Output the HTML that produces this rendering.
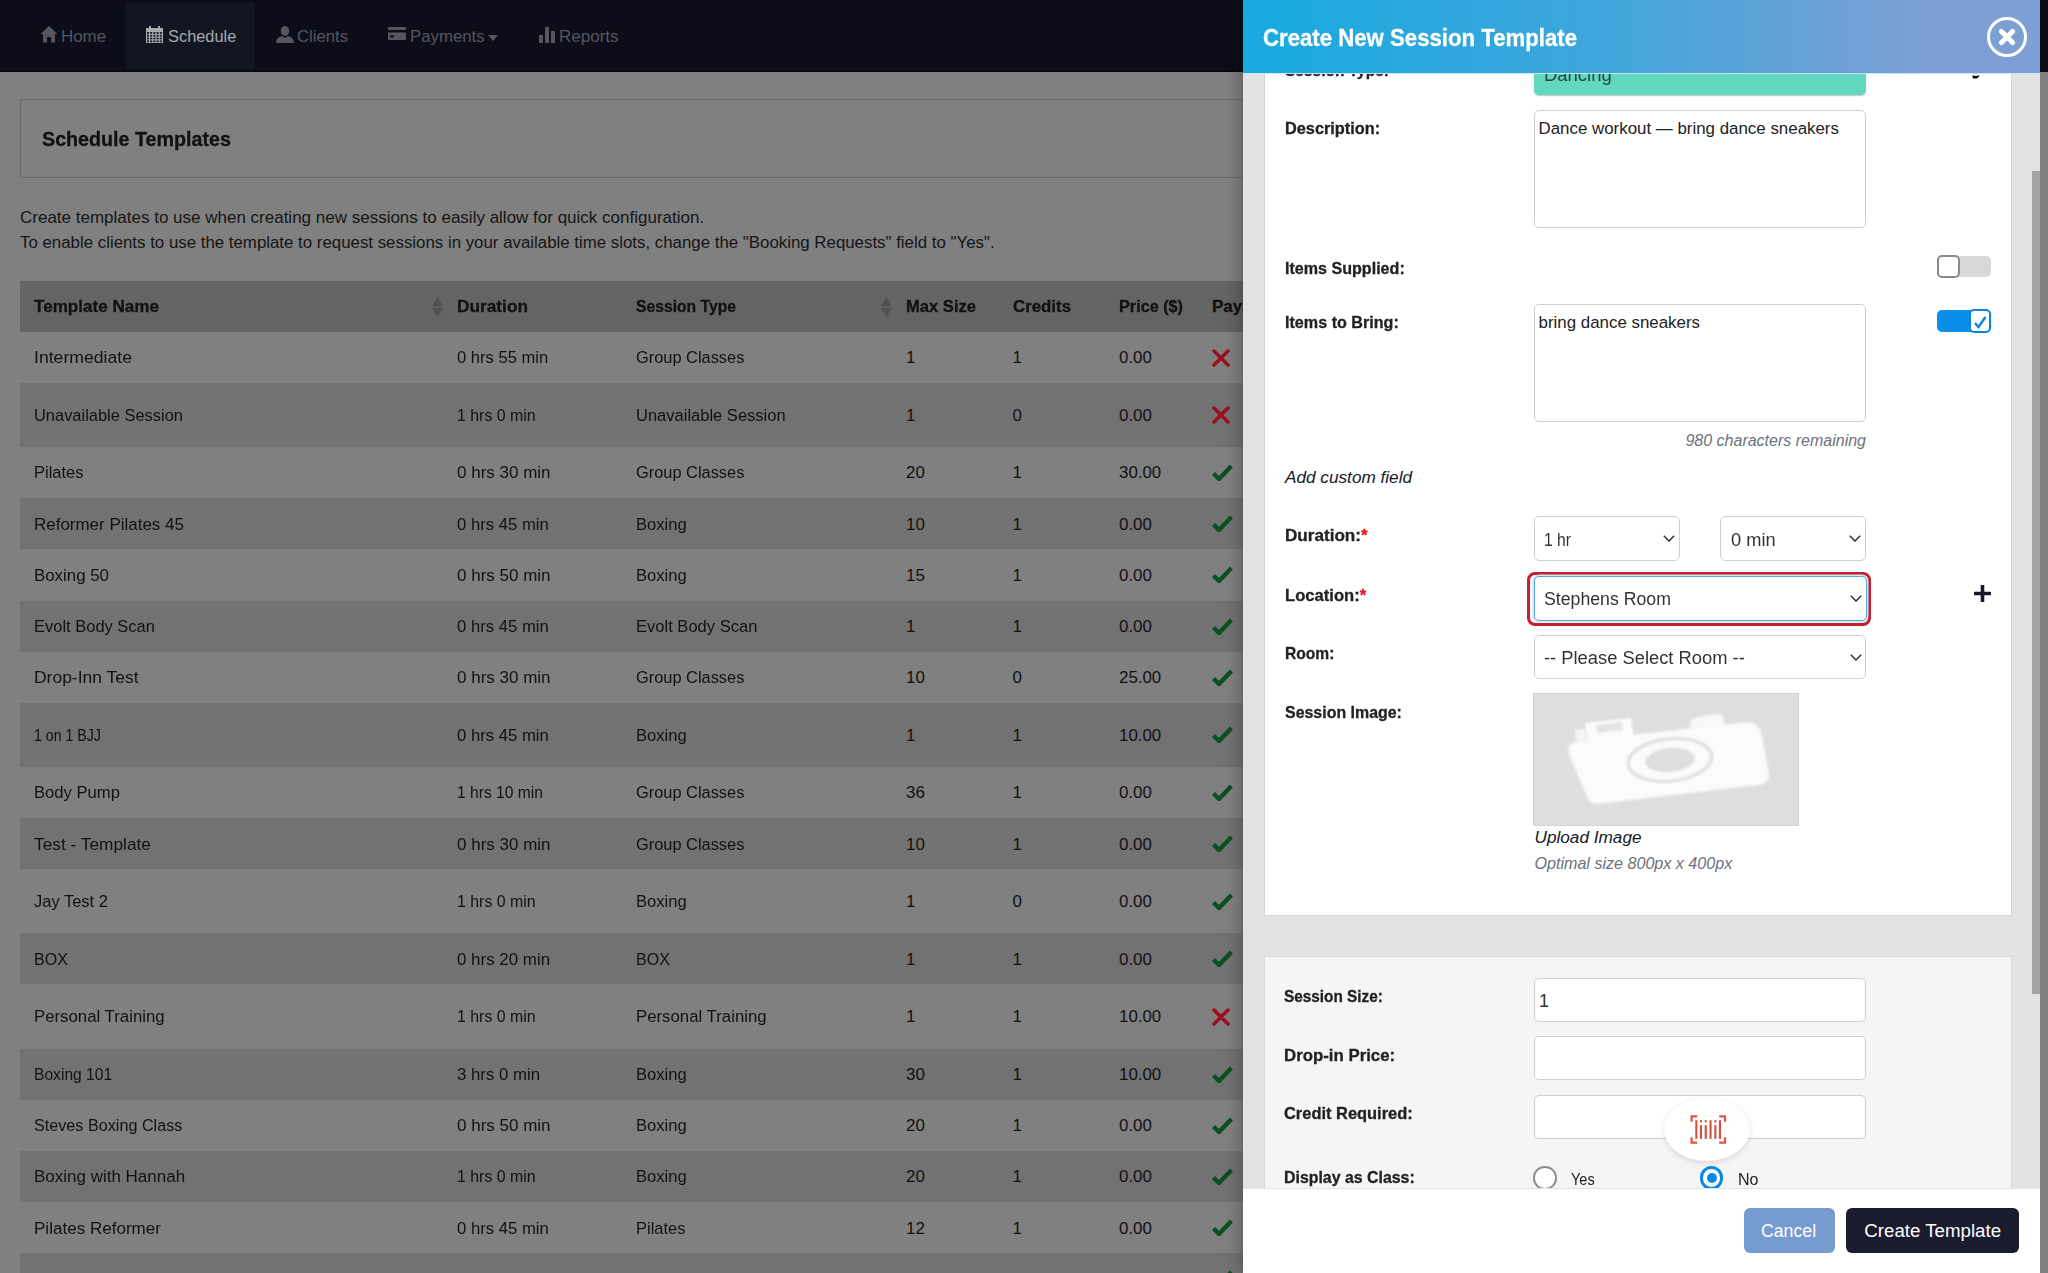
<!DOCTYPE html>
<html><head><meta charset="utf-8"><style>
html,body{margin:0;padding:0;}
body{width:2048px;height:1273px;overflow:hidden;position:relative;background:#808080;font-family:"Liberation Sans", sans-serif;}
.t{position:absolute;white-space:nowrap;}
.t[style*="font-weight:700"]{-webkit-text-stroke:0.3px currentColor;}
.b{position:absolute;}
</style></head><body>
<div class="b" style="left:0px;top:0px;width:2048px;height:71.5px;background:#0c0d19;"></div>
<div class="b" style="left:0px;top:71px;width:2048px;height:1.2px;background:#06070d;"></div>
<div class="b" style="left:126px;top:3px;width:129px;height:66px;background:#121620;"></div>
<svg class="b" style="left:40px;top:25px" width="18" height="18" viewBox="0 0 18 18"><path d="M9 1 L17.5 9 L15 9 L15 17.5 L11 17.5 L11 12 L7 12 L7 17.5 L3 17.5 L3 9 L0.5 9 Z" fill="#56565f"/></svg>
<div class="t" style="left:61px;top:26.93px;font-size:16.9px;line-height:19.43px;color:#56565f;">Home</div>
<svg class="b" style="left:146px;top:26px" width="17" height="17" viewBox="0 0 17 17"><rect x="0" y="2" width="17" height="15" fill="#a9a9ae"/><rect x="3" y="0" width="2" height="3" fill="#a9a9ae"/><rect x="12" y="0" width="2" height="3" fill="#a9a9ae"/><rect x="1.0" y="6.0" width="2" height="1.8" fill="#121620"/><rect x="1.0" y="8.8" width="2" height="1.8" fill="#121620"/><rect x="1.0" y="11.6" width="2" height="1.8" fill="#121620"/><rect x="1.0" y="14.4" width="2" height="1.8" fill="#121620"/><rect x="4.2" y="6.0" width="2" height="1.8" fill="#121620"/><rect x="4.2" y="8.8" width="2" height="1.8" fill="#121620"/><rect x="4.2" y="11.6" width="2" height="1.8" fill="#121620"/><rect x="4.2" y="14.4" width="2" height="1.8" fill="#121620"/><rect x="7.4" y="6.0" width="2" height="1.8" fill="#121620"/><rect x="7.4" y="8.8" width="2" height="1.8" fill="#121620"/><rect x="7.4" y="11.6" width="2" height="1.8" fill="#121620"/><rect x="7.4" y="14.4" width="2" height="1.8" fill="#121620"/><rect x="10.6" y="6.0" width="2" height="1.8" fill="#121620"/><rect x="10.6" y="8.8" width="2" height="1.8" fill="#121620"/><rect x="10.6" y="11.6" width="2" height="1.8" fill="#121620"/><rect x="10.6" y="14.4" width="2" height="1.8" fill="#121620"/><rect x="13.8" y="6.0" width="2" height="1.8" fill="#121620"/><rect x="13.8" y="8.8" width="2" height="1.8" fill="#121620"/><rect x="13.8" y="11.6" width="2" height="1.8" fill="#121620"/><rect x="13.8" y="14.4" width="2" height="1.8" fill="#121620"/></svg>
<div class="t" style="left:168px;top:27.39px;font-size:16.4px;line-height:18.86px;color:#a9a9ae;">Schedule</div>
<svg class="b" style="left:276px;top:26px" width="18" height="17" viewBox="0 0 18 17"><ellipse cx="9" cy="5" rx="4.2" ry="5" fill="#56565f"/><path d="M0 17 C0 12 4 10.5 6 10 L9 12 L12 10 C14 10.5 18 12 18 17 Z" fill="#56565f"/></svg>
<div class="t" style="left:297px;top:27.11px;font-size:16.7px;line-height:19.20px;color:#56565f;">Clients</div>
<svg class="b" style="left:388px;top:27px" width="18" height="13" viewBox="0 0 18 13"><rect x="0" y="0" width="18" height="13" rx="1" fill="#56565f"/><rect x="0" y="3" width="18" height="2.5" fill="#0c0d19"/><rect x="2" y="8.5" width="4" height="2" fill="#0c0d19"/></svg>
<div class="t" style="left:410px;top:27.02px;font-size:16.8px;line-height:19.32px;color:#56565f;">Payments</div>
<svg class="b" style="left:488px;top:34.5px" width="10" height="6" viewBox="0 0 10 6"><path d="M0 0 L10 0 L5 6 Z" fill="#56565f"/></svg>
<svg class="b" style="left:539px;top:27px" width="17" height="16" viewBox="0 0 17 16"><rect x="0" y="8" width="4" height="8" fill="#56565f"/><rect x="6" y="0" width="4" height="16" fill="#56565f"/><rect x="12" y="4" width="4" height="12" fill="#56565f"/></svg>
<div class="t" style="left:559px;top:26.83px;font-size:17px;line-height:19.55px;color:#56565f;">Reports</div>
<div class="b" style="left:20px;top:99px;width:1300px;height:78.5px;border:1.2px solid #6b6b6b;box-sizing:border-box;"></div>
<div class="t" style="left:42px;top:127.22px;font-size:20.6px;line-height:23.69px;color:#111;font-weight:700;transform:scaleX(0.9561);transform-origin:left center;">Schedule Templates</div>
<div class="t" style="left:20px;top:208.33px;font-size:17.0px;line-height:19.55px;color:#151515;">Create templates to use when creating new sessions to easily allow for quick configuration.</div>
<div class="t" style="left:20px;top:232.97px;font-size:16.85px;line-height:19.38px;color:#151515;">To enable clients to use the template to request sessions in your available time slots, change the "Booking Requests" field to "Yes".</div>
<div class="b" style="left:20px;top:280.5px;width:1300px;height:51.2px;background:#646464;"></div>
<div class="t" style="left:33.5px;top:297.13px;font-size:17px;line-height:19.55px;color:#111;font-weight:700;transform:scaleX(1.0048);transform-origin:left center;">Template Name</div>
<div class="t" style="left:456.5px;top:297.13px;font-size:17px;line-height:19.55px;color:#111;font-weight:700;transform:scaleX(1.0159);transform-origin:left center;">Duration</div>
<div class="t" style="left:635.5px;top:297.13px;font-size:17px;line-height:19.55px;color:#111;font-weight:700;transform:scaleX(0.9231);transform-origin:left center;">Session Type</div>
<div class="t" style="left:906px;top:297.13px;font-size:17px;line-height:19.55px;color:#111;font-weight:700;transform:scaleX(0.9748);transform-origin:left center;">Max Size</div>
<div class="t" style="left:1012.5px;top:297.13px;font-size:17px;line-height:19.55px;color:#111;font-weight:700;transform:scaleX(0.9902);transform-origin:left center;">Credits</div>
<div class="t" style="left:1119px;top:297.13px;font-size:17px;line-height:19.55px;color:#111;font-weight:700;transform:scaleX(0.9540);transform-origin:left center;">Price ($)</div>
<div class="t" style="left:1212px;top:297.13px;font-size:17px;line-height:19.55px;color:#111;font-weight:700;">Payable</div>
<svg class="b" style="left:432px;top:296.5px" width="11" height="20" viewBox="0 0 11 20"><path d="M5.5 0 L11 9.3 L0 9.3 Z" fill="#505050"/><path d="M5.5 20 L11 10.7 L0 10.7 Z" fill="#505050"/></svg>
<svg class="b" style="left:881px;top:296.5px" width="11" height="20" viewBox="0 0 11 20"><path d="M5.5 0 L11 9.3 L0 9.3 Z" fill="#505050"/><path d="M5.5 20 L11 10.7 L0 10.7 Z" fill="#505050"/></svg>
<div class="t" style="left:34px;top:348.23px;font-size:16.9px;line-height:19.43px;color:#111;transform:scaleX(1.0432);transform-origin:left center;">Intermediate</div>
<div class="t" style="left:456.6px;top:348.23px;font-size:16.9px;line-height:19.43px;color:#111;transform:scaleX(0.9807);transform-origin:left center;">0 hrs 55 min</div>
<div class="t" style="left:636px;top:348.23px;font-size:16.9px;line-height:19.43px;color:#111;transform:scaleX(0.9698);transform-origin:left center;">Group Classes</div>
<div class="t" style="left:906px;top:348.23px;font-size:16.9px;line-height:19.43px;color:#111;">1</div>
<div class="t" style="left:1012.5px;top:348.23px;font-size:16.9px;line-height:19.43px;color:#111;">1</div>
<div class="t" style="left:1119px;top:348.23px;font-size:16.9px;line-height:19.43px;color:#111;">0.00</div>
<svg class="b" style="left:1212px;top:348.6px" width="18" height="18" viewBox="0 0 18 18"><path d="M2 2 L16 16 M16 2 L2 16" stroke="#9c0e1d" stroke-width="3.5" stroke-linecap="round"/></svg>
<div class="b" style="left:20px;top:382.9px;width:1300px;height:64px;background:#727272;"></div>
<div class="t" style="left:34px;top:405.83px;font-size:16.9px;line-height:19.43px;color:#111;transform:scaleX(0.9730);transform-origin:left center;">Unavailable Session</div>
<div class="t" style="left:456.6px;top:405.83px;font-size:16.9px;line-height:19.43px;color:#111;transform:scaleX(0.9415);transform-origin:left center;">1 hrs 0 min</div>
<div class="t" style="left:636px;top:405.83px;font-size:16.9px;line-height:19.43px;color:#111;transform:scaleX(0.9776);transform-origin:left center;">Unavailable Session</div>
<div class="t" style="left:906px;top:405.83px;font-size:16.9px;line-height:19.43px;color:#111;">1</div>
<div class="t" style="left:1012.5px;top:405.83px;font-size:16.9px;line-height:19.43px;color:#111;">0</div>
<div class="t" style="left:1119px;top:405.83px;font-size:16.9px;line-height:19.43px;color:#111;">0.00</div>
<svg class="b" style="left:1212px;top:406.2px" width="18" height="18" viewBox="0 0 18 18"><path d="M2 2 L16 16 M16 2 L2 16" stroke="#9c0e1d" stroke-width="3.5" stroke-linecap="round"/></svg>
<div class="t" style="left:34px;top:463.43px;font-size:16.9px;line-height:19.43px;color:#111;transform:scaleX(0.9739);transform-origin:left center;">Pilates</div>
<div class="t" style="left:456.6px;top:463.43px;font-size:16.9px;line-height:19.43px;color:#111;transform:scaleX(1.0065);transform-origin:left center;">0 hrs 30 min</div>
<div class="t" style="left:636px;top:463.43px;font-size:16.9px;line-height:19.43px;color:#111;transform:scaleX(0.9698);transform-origin:left center;">Group Classes</div>
<div class="t" style="left:906px;top:463.43px;font-size:16.9px;line-height:19.43px;color:#111;">20</div>
<div class="t" style="left:1012.5px;top:463.43px;font-size:16.9px;line-height:19.43px;color:#111;">1</div>
<div class="t" style="left:1119px;top:463.43px;font-size:16.9px;line-height:19.43px;color:#111;">30.00</div>
<svg class="b" style="left:1212px;top:464.0px" width="21" height="17" viewBox="0 0 21 17"><path d="M1.5 9.5 L7 15 L19.5 2" stroke="#0b4f22" stroke-width="4.4" fill="none" stroke-linecap="butt"/></svg>
<div class="b" style="left:20px;top:498.1px;width:1300px;height:51.2px;background:#727272;"></div>
<div class="t" style="left:34px;top:514.63px;font-size:16.9px;line-height:19.43px;color:#111;transform:scaleX(1.0044);transform-origin:left center;">Reformer Pilates 45</div>
<div class="t" style="left:456.6px;top:514.63px;font-size:16.9px;line-height:19.43px;color:#111;transform:scaleX(0.9882);transform-origin:left center;">0 hrs 45 min</div>
<div class="t" style="left:636px;top:514.63px;font-size:16.9px;line-height:19.43px;color:#111;transform:scaleX(0.9811);transform-origin:left center;">Boxing</div>
<div class="t" style="left:906px;top:514.63px;font-size:16.9px;line-height:19.43px;color:#111;">10</div>
<div class="t" style="left:1012.5px;top:514.63px;font-size:16.9px;line-height:19.43px;color:#111;">1</div>
<div class="t" style="left:1119px;top:514.63px;font-size:16.9px;line-height:19.43px;color:#111;">0.00</div>
<svg class="b" style="left:1212px;top:515.2px" width="21" height="17" viewBox="0 0 21 17"><path d="M1.5 9.5 L7 15 L19.5 2" stroke="#0b4f22" stroke-width="4.4" fill="none" stroke-linecap="butt"/></svg>
<div class="t" style="left:34px;top:565.83px;font-size:16.9px;line-height:19.43px;color:#111;transform:scaleX(0.9977);transform-origin:left center;">Boxing 50</div>
<div class="t" style="left:456.6px;top:565.83px;font-size:16.9px;line-height:19.43px;color:#111;transform:scaleX(1.0065);transform-origin:left center;">0 hrs 50 min</div>
<div class="t" style="left:636px;top:565.83px;font-size:16.9px;line-height:19.43px;color:#111;transform:scaleX(0.9811);transform-origin:left center;">Boxing</div>
<div class="t" style="left:906px;top:565.83px;font-size:16.9px;line-height:19.43px;color:#111;">15</div>
<div class="t" style="left:1012.5px;top:565.83px;font-size:16.9px;line-height:19.43px;color:#111;">1</div>
<div class="t" style="left:1119px;top:565.83px;font-size:16.9px;line-height:19.43px;color:#111;">0.00</div>
<svg class="b" style="left:1212px;top:566.4px" width="21" height="17" viewBox="0 0 21 17"><path d="M1.5 9.5 L7 15 L19.5 2" stroke="#0b4f22" stroke-width="4.4" fill="none" stroke-linecap="butt"/></svg>
<div class="b" style="left:20px;top:600.5px;width:1300px;height:51.2px;background:#727272;"></div>
<div class="t" style="left:34px;top:617.03px;font-size:16.9px;line-height:19.43px;color:#111;transform:scaleX(0.9758);transform-origin:left center;">Evolt Body Scan</div>
<div class="t" style="left:456.6px;top:617.03px;font-size:16.9px;line-height:19.43px;color:#111;transform:scaleX(0.9882);transform-origin:left center;">0 hrs 45 min</div>
<div class="t" style="left:636px;top:617.03px;font-size:16.9px;line-height:19.43px;color:#111;transform:scaleX(0.9790);transform-origin:left center;">Evolt Body Scan</div>
<div class="t" style="left:906px;top:617.03px;font-size:16.9px;line-height:19.43px;color:#111;">1</div>
<div class="t" style="left:1012.5px;top:617.03px;font-size:16.9px;line-height:19.43px;color:#111;">1</div>
<div class="t" style="left:1119px;top:617.03px;font-size:16.9px;line-height:19.43px;color:#111;">0.00</div>
<svg class="b" style="left:1212px;top:617.6px" width="21" height="17" viewBox="0 0 21 17"><path d="M1.5 9.5 L7 15 L19.5 2" stroke="#0b4f22" stroke-width="4.4" fill="none" stroke-linecap="butt"/></svg>
<div class="t" style="left:34px;top:668.23px;font-size:16.9px;line-height:19.43px;color:#111;transform:scaleX(1.0342);transform-origin:left center;">Drop-Inn Test</div>
<div class="t" style="left:456.6px;top:668.23px;font-size:16.9px;line-height:19.43px;color:#111;transform:scaleX(1.0065);transform-origin:left center;">0 hrs 30 min</div>
<div class="t" style="left:636px;top:668.23px;font-size:16.9px;line-height:19.43px;color:#111;transform:scaleX(0.9698);transform-origin:left center;">Group Classes</div>
<div class="t" style="left:906px;top:668.23px;font-size:16.9px;line-height:19.43px;color:#111;">10</div>
<div class="t" style="left:1012.5px;top:668.23px;font-size:16.9px;line-height:19.43px;color:#111;">0</div>
<div class="t" style="left:1119px;top:668.23px;font-size:16.9px;line-height:19.43px;color:#111;">25.00</div>
<svg class="b" style="left:1212px;top:668.8px" width="21" height="17" viewBox="0 0 21 17"><path d="M1.5 9.5 L7 15 L19.5 2" stroke="#0b4f22" stroke-width="4.4" fill="none" stroke-linecap="butt"/></svg>
<div class="b" style="left:20px;top:702.9px;width:1300px;height:64px;background:#727272;"></div>
<div class="t" style="left:34px;top:725.83px;font-size:16.9px;line-height:19.43px;color:#111;transform:scaleX(0.8378);transform-origin:left center;">1 on 1 BJJ</div>
<div class="t" style="left:456.6px;top:725.83px;font-size:16.9px;line-height:19.43px;color:#111;transform:scaleX(0.9882);transform-origin:left center;">0 hrs 45 min</div>
<div class="t" style="left:636px;top:725.83px;font-size:16.9px;line-height:19.43px;color:#111;transform:scaleX(0.9811);transform-origin:left center;">Boxing</div>
<div class="t" style="left:906px;top:725.83px;font-size:16.9px;line-height:19.43px;color:#111;">1</div>
<div class="t" style="left:1012.5px;top:725.83px;font-size:16.9px;line-height:19.43px;color:#111;">1</div>
<div class="t" style="left:1119px;top:725.83px;font-size:16.9px;line-height:19.43px;color:#111;">10.00</div>
<svg class="b" style="left:1212px;top:726.4px" width="21" height="17" viewBox="0 0 21 17"><path d="M1.5 9.5 L7 15 L19.5 2" stroke="#0b4f22" stroke-width="4.4" fill="none" stroke-linecap="butt"/></svg>
<div class="t" style="left:34px;top:783.43px;font-size:16.9px;line-height:19.43px;color:#111;transform:scaleX(0.9844);transform-origin:left center;">Body Pump</div>
<div class="t" style="left:456.6px;top:783.43px;font-size:16.9px;line-height:19.43px;color:#111;transform:scaleX(0.9248);transform-origin:left center;">1 hrs 10 min</div>
<div class="t" style="left:636px;top:783.43px;font-size:16.9px;line-height:19.43px;color:#111;transform:scaleX(0.9698);transform-origin:left center;">Group Classes</div>
<div class="t" style="left:906px;top:783.43px;font-size:16.9px;line-height:19.43px;color:#111;">36</div>
<div class="t" style="left:1012.5px;top:783.43px;font-size:16.9px;line-height:19.43px;color:#111;">1</div>
<div class="t" style="left:1119px;top:783.43px;font-size:16.9px;line-height:19.43px;color:#111;">0.00</div>
<svg class="b" style="left:1212px;top:784.0px" width="21" height="17" viewBox="0 0 21 17"><path d="M1.5 9.5 L7 15 L19.5 2" stroke="#0b4f22" stroke-width="4.4" fill="none" stroke-linecap="butt"/></svg>
<div class="b" style="left:20px;top:818.1px;width:1300px;height:51.2px;background:#727272;"></div>
<div class="t" style="left:34px;top:834.63px;font-size:16.9px;line-height:19.43px;color:#111;transform:scaleX(1.0238);transform-origin:left center;">Test - Template</div>
<div class="t" style="left:456.6px;top:834.63px;font-size:16.9px;line-height:19.43px;color:#111;transform:scaleX(1.0065);transform-origin:left center;">0 hrs 30 min</div>
<div class="t" style="left:636px;top:834.63px;font-size:16.9px;line-height:19.43px;color:#111;transform:scaleX(0.9698);transform-origin:left center;">Group Classes</div>
<div class="t" style="left:906px;top:834.63px;font-size:16.9px;line-height:19.43px;color:#111;">10</div>
<div class="t" style="left:1012.5px;top:834.63px;font-size:16.9px;line-height:19.43px;color:#111;">1</div>
<div class="t" style="left:1119px;top:834.63px;font-size:16.9px;line-height:19.43px;color:#111;">0.00</div>
<svg class="b" style="left:1212px;top:835.2px" width="21" height="17" viewBox="0 0 21 17"><path d="M1.5 9.5 L7 15 L19.5 2" stroke="#0b4f22" stroke-width="4.4" fill="none" stroke-linecap="butt"/></svg>
<div class="t" style="left:34px;top:892.23px;font-size:16.9px;line-height:19.43px;color:#111;transform:scaleX(0.9765);transform-origin:left center;">Jay Test 2</div>
<div class="t" style="left:456.6px;top:892.23px;font-size:16.9px;line-height:19.43px;color:#111;transform:scaleX(0.9415);transform-origin:left center;">1 hrs 0 min</div>
<div class="t" style="left:636px;top:892.23px;font-size:16.9px;line-height:19.43px;color:#111;transform:scaleX(0.9811);transform-origin:left center;">Boxing</div>
<div class="t" style="left:906px;top:892.23px;font-size:16.9px;line-height:19.43px;color:#111;">1</div>
<div class="t" style="left:1012.5px;top:892.23px;font-size:16.9px;line-height:19.43px;color:#111;">0</div>
<div class="t" style="left:1119px;top:892.23px;font-size:16.9px;line-height:19.43px;color:#111;">0.00</div>
<svg class="b" style="left:1212px;top:892.8px" width="21" height="17" viewBox="0 0 21 17"><path d="M1.5 9.5 L7 15 L19.5 2" stroke="#0b4f22" stroke-width="4.4" fill="none" stroke-linecap="butt"/></svg>
<div class="b" style="left:20px;top:933.3px;width:1300px;height:51.2px;background:#727272;"></div>
<div class="t" style="left:34px;top:949.83px;font-size:16.9px;line-height:19.43px;color:#111;transform:scaleX(0.9498);transform-origin:left center;">BOX</div>
<div class="t" style="left:456.6px;top:949.83px;font-size:16.9px;line-height:19.43px;color:#111;transform:scaleX(1.0022);transform-origin:left center;">0 hrs 20 min</div>
<div class="t" style="left:636px;top:949.83px;font-size:16.9px;line-height:19.43px;color:#111;transform:scaleX(0.9498);transform-origin:left center;">BOX</div>
<div class="t" style="left:906px;top:949.83px;font-size:16.9px;line-height:19.43px;color:#111;">1</div>
<div class="t" style="left:1012.5px;top:949.83px;font-size:16.9px;line-height:19.43px;color:#111;">1</div>
<div class="t" style="left:1119px;top:949.83px;font-size:16.9px;line-height:19.43px;color:#111;">0.00</div>
<svg class="b" style="left:1212px;top:950.4px" width="21" height="17" viewBox="0 0 21 17"><path d="M1.5 9.5 L7 15 L19.5 2" stroke="#0b4f22" stroke-width="4.4" fill="none" stroke-linecap="butt"/></svg>
<div class="t" style="left:34px;top:1007.43px;font-size:16.9px;line-height:19.43px;color:#111;transform:scaleX(0.9937);transform-origin:left center;">Personal Training</div>
<div class="t" style="left:456.6px;top:1007.43px;font-size:16.9px;line-height:19.43px;color:#111;transform:scaleX(0.9415);transform-origin:left center;">1 hrs 0 min</div>
<div class="t" style="left:636px;top:1007.43px;font-size:16.9px;line-height:19.43px;color:#111;transform:scaleX(0.9937);transform-origin:left center;">Personal Training</div>
<div class="t" style="left:906px;top:1007.43px;font-size:16.9px;line-height:19.43px;color:#111;">1</div>
<div class="t" style="left:1012.5px;top:1007.43px;font-size:16.9px;line-height:19.43px;color:#111;">1</div>
<div class="t" style="left:1119px;top:1007.43px;font-size:16.9px;line-height:19.43px;color:#111;">10.00</div>
<svg class="b" style="left:1212px;top:1007.8px" width="18" height="18" viewBox="0 0 18 18"><path d="M2 2 L16 16 M16 2 L2 16" stroke="#9c0e1d" stroke-width="3.5" stroke-linecap="round"/></svg>
<div class="b" style="left:20px;top:1048.5px;width:1300px;height:51.2px;background:#727272;"></div>
<div class="t" style="left:34px;top:1065.03px;font-size:16.9px;line-height:19.43px;color:#111;transform:scaleX(0.9247);transform-origin:left center;">Boxing 101</div>
<div class="t" style="left:456.6px;top:1065.03px;font-size:16.9px;line-height:19.43px;color:#111;transform:scaleX(0.9929);transform-origin:left center;">3 hrs 0 min</div>
<div class="t" style="left:636px;top:1065.03px;font-size:16.9px;line-height:19.43px;color:#111;transform:scaleX(0.9811);transform-origin:left center;">Boxing</div>
<div class="t" style="left:906px;top:1065.03px;font-size:16.9px;line-height:19.43px;color:#111;">30</div>
<div class="t" style="left:1012.5px;top:1065.03px;font-size:16.9px;line-height:19.43px;color:#111;">1</div>
<div class="t" style="left:1119px;top:1065.03px;font-size:16.9px;line-height:19.43px;color:#111;">10.00</div>
<svg class="b" style="left:1212px;top:1065.6px" width="21" height="17" viewBox="0 0 21 17"><path d="M1.5 9.5 L7 15 L19.5 2" stroke="#0b4f22" stroke-width="4.4" fill="none" stroke-linecap="butt"/></svg>
<div class="t" style="left:34px;top:1116.23px;font-size:16.9px;line-height:19.43px;color:#111;transform:scaleX(0.9575);transform-origin:left center;">Steves Boxing Class</div>
<div class="t" style="left:456.6px;top:1116.23px;font-size:16.9px;line-height:19.43px;color:#111;transform:scaleX(1.0065);transform-origin:left center;">0 hrs 50 min</div>
<div class="t" style="left:636px;top:1116.23px;font-size:16.9px;line-height:19.43px;color:#111;transform:scaleX(0.9811);transform-origin:left center;">Boxing</div>
<div class="t" style="left:906px;top:1116.23px;font-size:16.9px;line-height:19.43px;color:#111;">20</div>
<div class="t" style="left:1012.5px;top:1116.23px;font-size:16.9px;line-height:19.43px;color:#111;">1</div>
<div class="t" style="left:1119px;top:1116.23px;font-size:16.9px;line-height:19.43px;color:#111;">0.00</div>
<svg class="b" style="left:1212px;top:1116.8px" width="21" height="17" viewBox="0 0 21 17"><path d="M1.5 9.5 L7 15 L19.5 2" stroke="#0b4f22" stroke-width="4.4" fill="none" stroke-linecap="butt"/></svg>
<div class="b" style="left:20px;top:1150.9px;width:1300px;height:51.2px;background:#727272;"></div>
<div class="t" style="left:34px;top:1167.43px;font-size:16.9px;line-height:19.43px;color:#111;transform:scaleX(1.0058);transform-origin:left center;">Boxing with Hannah</div>
<div class="t" style="left:456.6px;top:1167.43px;font-size:16.9px;line-height:19.43px;color:#111;transform:scaleX(0.9415);transform-origin:left center;">1 hrs 0 min</div>
<div class="t" style="left:636px;top:1167.43px;font-size:16.9px;line-height:19.43px;color:#111;transform:scaleX(0.9811);transform-origin:left center;">Boxing</div>
<div class="t" style="left:906px;top:1167.43px;font-size:16.9px;line-height:19.43px;color:#111;">20</div>
<div class="t" style="left:1012.5px;top:1167.43px;font-size:16.9px;line-height:19.43px;color:#111;">1</div>
<div class="t" style="left:1119px;top:1167.43px;font-size:16.9px;line-height:19.43px;color:#111;">0.00</div>
<svg class="b" style="left:1212px;top:1168.0px" width="21" height="17" viewBox="0 0 21 17"><path d="M1.5 9.5 L7 15 L19.5 2" stroke="#0b4f22" stroke-width="4.4" fill="none" stroke-linecap="butt"/></svg>
<div class="t" style="left:34px;top:1218.63px;font-size:16.9px;line-height:19.43px;color:#111;transform:scaleX(1.0091);transform-origin:left center;">Pilates Reformer</div>
<div class="t" style="left:456.6px;top:1218.63px;font-size:16.9px;line-height:19.43px;color:#111;transform:scaleX(0.9882);transform-origin:left center;">0 hrs 45 min</div>
<div class="t" style="left:636px;top:1218.63px;font-size:16.9px;line-height:19.43px;color:#111;transform:scaleX(0.9739);transform-origin:left center;">Pilates</div>
<div class="t" style="left:906px;top:1218.63px;font-size:16.9px;line-height:19.43px;color:#111;">12</div>
<div class="t" style="left:1012.5px;top:1218.63px;font-size:16.9px;line-height:19.43px;color:#111;">1</div>
<div class="t" style="left:1119px;top:1218.63px;font-size:16.9px;line-height:19.43px;color:#111;">0.00</div>
<svg class="b" style="left:1212px;top:1219.2px" width="21" height="17" viewBox="0 0 21 17"><path d="M1.5 9.5 L7 15 L19.5 2" stroke="#0b4f22" stroke-width="4.4" fill="none" stroke-linecap="butt"/></svg>
<div class="b" style="left:20px;top:1253.3px;width:1300px;height:51.2px;background:#727272;"></div>
<div class="t" style="left:34px;top:1269.83px;font-size:16.9px;line-height:19.43px;color:#111;">Kickboxing Hannah</div>
<div class="t" style="left:456.6px;top:1269.83px;font-size:16.9px;line-height:19.43px;color:#111;transform:scaleX(0.9415);transform-origin:left center;">1 hrs 0 min</div>
<div class="t" style="left:636px;top:1269.83px;font-size:16.9px;line-height:19.43px;color:#111;">Kickboxing</div>
<div class="t" style="left:906px;top:1269.83px;font-size:16.9px;line-height:19.43px;color:#111;">10</div>
<div class="t" style="left:1012.5px;top:1269.83px;font-size:16.9px;line-height:19.43px;color:#111;">1</div>
<div class="t" style="left:1119px;top:1269.83px;font-size:16.9px;line-height:19.43px;color:#111;">0.00</div>
<svg class="b" style="left:1212px;top:1270.4px" width="21" height="17" viewBox="0 0 21 17"><path d="M1.5 9.5 L7 15 L19.5 2" stroke="#0b4f22" stroke-width="4.4" fill="none" stroke-linecap="butt"/></svg>
<div class="b" style="left:1243px;top:0px;width:797px;height:1273px;box-shadow:0 0 18px rgba(0,0,0,0.35);background:#e3e3e3;"></div>
<div class="b" style="left:2032px;top:171px;width:8px;height:823px;background:#a3a3a3;"></div>
<div class="b" style="left:1263.5px;top:40px;width:748px;height:875.5px;background:#fff;border:1px solid #d6d6d6;box-sizing:border-box;"></div>
<div class="b" style="left:1263.5px;top:955.8px;width:748px;height:300px;background:#f5f5f5;border:1px solid #d9d9d9;box-sizing:border-box;"></div>
<div class="t" style="left:1284.5px;top:61.23px;font-size:16.9px;line-height:19.43px;color:#222;font-weight:700;transform:scaleX(0.9177);transform-origin:left center;">Session Type:</div>
<div class="b" style="left:1533.5px;top:50px;width:332.5px;height:45px;background:#63d8c0;border-radius:5px;box-shadow:0 1px 1.5px rgba(0,0,0,0.25);"></div>
<div class="t" style="left:1543.6px;top:64.25px;font-size:18.5px;line-height:21.27px;color:#1e4843;transform:scaleX(0.9974);transform-origin:left center;">Dancing</div>
<svg class="b" style="left:1972px;top:74.5px" width="9" height="4" viewBox="0 0 9 4"><path d="M0.3 0.3 Q2.5 1.2 4 1 L8 0.3 L5 3.5 L1 3.5 Z" fill="#000"/></svg>
<div class="t" style="left:1284.5px;top:119.03px;font-size:16.9px;line-height:19.43px;color:#222;font-weight:700;transform:scaleX(0.9655);transform-origin:left center;">Description:</div>
<div class="b" style="left:1533.5px;top:110.3px;width:332.5px;height:118px;background:#fff;border:1.3px solid #cfcfcf;border-radius:5px;box-sizing:border-box;"></div>
<div class="t" style="left:1538.5px;top:119.33px;font-size:16.9px;line-height:19.43px;color:#222;">Dance workout — bring dance sneakers</div>
<div class="t" style="left:1284.7px;top:258.93px;font-size:16.9px;line-height:19.43px;color:#222;font-weight:700;transform:scaleX(0.9521);transform-origin:left center;">Items Supplied:</div>
<div class="b" style="left:1937px;top:256px;width:53.5px;height:20.7px;background:#d8d8d8;border-radius:5px;"></div>
<div class="b" style="left:1937px;top:254.7px;width:22.5px;height:23.3px;background:#fff;border:2.2px solid #8a8a8a;border-radius:5px;box-sizing:border-box;"></div>
<div class="t" style="left:1284.7px;top:313.43px;font-size:16.9px;line-height:19.43px;color:#222;font-weight:700;transform:scaleX(0.9552);transform-origin:left center;">Items to Bring:</div>
<div class="b" style="left:1533.5px;top:304px;width:332.5px;height:118.2px;background:#fff;border:1.3px solid #cfcfcf;border-radius:5px;box-sizing:border-box;"></div>
<div class="t" style="left:1538.5px;top:312.73px;font-size:16.9px;line-height:19.43px;color:#222;">bring dance sneakers</div>
<div class="b" style="left:1937px;top:310px;width:53px;height:21.6px;background:#0a8ee9;border-radius:5px;"></div>
<div class="b" style="left:1969.3px;top:309px;width:21.7px;height:23.6px;background:#fff;border:2.2px solid #0a84dc;border-radius:5px;box-sizing:border-box;"></div>
<svg class="b" style="left:1973px;top:315px" width="14" height="14" viewBox="0 0 14 14"><path d="M2 8 L5.5 12 L12.5 2" stroke="#0a84dc" stroke-width="2.4" fill="none"/></svg>
<div class="t" style="right:182px;top:431.66px;font-size:16.0px;line-height:18.40px;color:#6c727a;font-style:italic;">980 characters remaining</div>
<div class="t" style="left:1285px;top:467.85px;font-size:17.2px;line-height:19.78px;color:#141827;font-style:italic;">Add custom field</div>
<div class="t" style="left:1284.6px;top:525.93px;font-size:16.9px;line-height:19.43px;color:#222;font-weight:700;transform:scaleX(1.0125);transform-origin:left center;">Duration:<span style="color:#e5141b">*</span></div>
<div class="b" style="left:1533.5px;top:516.3px;width:146px;height:44.3px;background:#fff;border:1.3px solid #cfcfcf;border-radius:5px;box-sizing:border-box;"></div>
<svg class="b" style="left:1663.0px;top:534.9px" width="12" height="7" viewBox="0 0 12 7"><path d="M0.8 0.8 L6 6 L11.2 0.8" stroke="#333" stroke-width="1.5" fill="none"/></svg>
<div class="t" style="left:1544px;top:529.14px;font-size:18.3px;line-height:21.04px;color:#333;transform:scaleX(0.8562);transform-origin:left center;">1 hr</div>
<div class="b" style="left:1720.4px;top:516.3px;width:145.5px;height:44.3px;background:#fff;border:1.3px solid #cfcfcf;border-radius:5px;box-sizing:border-box;"></div>
<svg class="b" style="left:1849.4px;top:534.9px" width="12" height="7" viewBox="0 0 12 7"><path d="M0.8 0.8 L6 6 L11.2 0.8" stroke="#333" stroke-width="1.5" fill="none"/></svg>
<div class="t" style="left:1731px;top:529.14px;font-size:18.3px;line-height:21.04px;color:#333;transform:scaleX(0.9989);transform-origin:left center;">0 min</div>
<div class="t" style="left:1284.6px;top:585.63px;font-size:16.9px;line-height:19.43px;color:#222;font-weight:700;transform:scaleX(0.9828);transform-origin:left center;">Location:<span style="color:#e5141b">*</span></div>
<div class="b" style="left:1527.3px;top:571.7px;width:343.5px;height:54.6px;border:3.2px solid #c81d2c;border-radius:8px;box-sizing:border-box;"></div>
<div class="b" style="left:1533.5px;top:576.2px;width:333px;height:45px;background:#fff;border:1.5px solid #5aa6dc;border-radius:5px;box-sizing:border-box;box-shadow:0 0 0 1.5px #cfe6f7;"></div>
<svg class="b" style="left:1849.5px;top:595px" width="12" height="7" viewBox="0 0 12 7"><path d="M0.8 0.8 L6 6 L11.2 0.8" stroke="#333" stroke-width="1.5" fill="none"/></svg>
<div class="t" style="left:1544px;top:588.34px;font-size:18.3px;line-height:21.04px;color:#333;transform:scaleX(0.9678);transform-origin:left center;">Stephens Room</div>
<svg class="b" style="left:1974px;top:584.5px" width="17" height="17" viewBox="0 0 17 17"><path d="M8.5 1 V16 M1 8.5 H16" stroke="#141827" stroke-width="3.6" stroke-linecap="round"/></svg>
<div class="t" style="left:1284.6px;top:644.13px;font-size:16.9px;line-height:19.43px;color:#222;font-weight:700;transform:scaleX(0.9232);transform-origin:left center;">Room:</div>
<div class="b" style="left:1533.5px;top:635.3px;width:332.5px;height:44px;background:#fff;border:1.3px solid #cfcfcf;border-radius:5px;box-sizing:border-box;"></div>
<svg class="b" style="left:1849.5px;top:653.8px" width="12" height="7" viewBox="0 0 12 7"><path d="M0.8 0.8 L6 6 L11.2 0.8" stroke="#333" stroke-width="1.5" fill="none"/></svg>
<div class="t" style="left:1544px;top:646.54px;font-size:18.3px;line-height:21.04px;color:#333;transform:scaleX(1.0032);transform-origin:left center;">-- Please Select Room --</div>
<div class="t" style="left:1284.6px;top:702.93px;font-size:16.9px;line-height:19.43px;color:#222;font-weight:700;transform:scaleX(0.9437);transform-origin:left center;">Session Image:</div>
<div class="b" style="left:1533.4px;top:693px;width:265.5px;height:132.6px;background:#dedede;border:1px solid #d2d2d2;box-sizing:border-box;"></div>
<svg class="b" style="left:1533.4px;top:693px" width="265" height="132" viewBox="0 0 265 132">
<defs><filter id="bl" x="-10%" y="-10%" width="120%" height="120%"><feGaussianBlur stdDeviation="0.8"/></filter></defs>
<g filter="url(#bl)">
<path d="M44 48 L212 29 Q226 28 229 42 L236 80 Q238 90 226 92 L66 111 Q56 112 53 102 L36 62 Q33 50 44 48 Z" fill="#fbfbfb" stroke="#e9e9e9" stroke-width="1.5"/>
<path d="M52 30 L98 25 L101 45 L55 50 Z" fill="#fbfbfb"/>
<path d="M63 32 L89 29 L90 37 L64 40 Z" fill="#e4e4e4"/>
<path d="M42 37 L52 36 L53 47 L43 48 Z" fill="#f6f6f6"/>
<path d="M157 29 Q160 23 185 21 Q191 21 191 26 L191 33 L157 36 Z" fill="#f8f8f8"/>
<ellipse cx="137" cy="67" rx="42" ry="21" fill="none" stroke="#e0e0e0" stroke-width="3.5" transform="rotate(-6 137 67)"/>
<ellipse cx="137" cy="67" rx="25" ry="12" fill="#dedede" transform="rotate(-6 137 67)"/>
</g></svg>
<div class="t" style="left:1534.5px;top:828.45px;font-size:17.2px;line-height:19.78px;color:#141827;font-style:italic;">Upload Image</div>
<div class="t" style="left:1534.5px;top:853.96px;font-size:16.1px;line-height:18.52px;color:#6c727a;font-style:italic;">Optimal size 800px x 400px</div>
<div class="t" style="left:1284.2px;top:987.23px;font-size:16.9px;line-height:19.43px;color:#222;font-weight:700;transform:scaleX(0.9086);transform-origin:left center;">Session Size:</div>
<div class="b" style="left:1533.5px;top:977.8px;width:332.5px;height:44.2px;background:#fff;border:1.3px solid #cfcfcf;border-radius:5px;box-sizing:border-box;"></div>
<div class="t" style="left:1539px;top:990.91px;font-size:18px;line-height:20.70px;color:#333;">1</div>
<div class="t" style="left:1284.2px;top:1045.83px;font-size:16.9px;line-height:19.43px;color:#222;font-weight:700;transform:scaleX(0.9951);transform-origin:left center;">Drop-in Price:</div>
<div class="b" style="left:1533.5px;top:1036.2px;width:332.5px;height:44.2px;background:#fff;border:1.3px solid #cfcfcf;border-radius:5px;box-sizing:border-box;"></div>
<div class="t" style="left:1284.2px;top:1104.13px;font-size:16.9px;line-height:19.43px;color:#222;font-weight:700;transform:scaleX(0.9728);transform-origin:left center;">Credit Required:</div>
<div class="b" style="left:1533.5px;top:1094.8px;width:332.5px;height:44.2px;background:#fff;border:1.3px solid #cfcfcf;border-radius:5px;box-sizing:border-box;"></div>
<div class="t" style="left:1284.2px;top:1168.43px;font-size:16.9px;line-height:19.43px;color:#222;font-weight:700;transform:scaleX(0.9408);transform-origin:left center;">Display as Class:</div>
<div class="b" style="left:1533.2px;top:1166.3px;width:23.4px;height:23.4px;border:2.2px solid #8c8c8c;border-radius:50%;box-sizing:border-box;background:#fff;"></div>
<div class="t" style="left:1571px;top:1169.53px;font-size:17px;line-height:19.55px;color:#222;transform:scaleX(0.8545);transform-origin:left center;">Yes</div>
<div class="b" style="left:1700px;top:1166.3px;width:23.4px;height:23.4px;border:3px solid #0a88e6;border-radius:50%;box-sizing:border-box;background:#fff;"></div>
<div class="b" style="left:1706.8px;top:1173.1px;width:9.8px;height:9.8px;background:#0a88e6;border-radius:50%;"></div>
<div class="t" style="left:1737.7px;top:1169.53px;font-size:17px;line-height:19.55px;color:#222;transform:scaleX(0.9433);transform-origin:left center;">No</div>
<div class="b" style="left:1663.7px;top:1097.9px;width:86px;height:63.2px;background:#fff;border-radius:50%;box-shadow:0 2px 6px rgba(0,0,0,0.12);"></div>
<svg class="b" style="left:1689.5px;top:1115px" width="37" height="30" viewBox="0 0 37 30">
<path d="M1.6 6.8 V1.4 H7.2 M1.6 22.2 V27.6 H7.2 M29.2 1.4 H35 V6.8 M29.2 27.6 H35 V22.2" stroke="#e5533c" stroke-width="2.2" fill="none"/>
<rect x="5.3" y="5.2" width="2.1" height="18.7" fill="#d5513e"/><rect x="9.9" y="5.2" width="2.1" height="2.1" fill="#d5513e"/><rect x="9.9" y="10.1" width="2.1" height="13.8" fill="#d5513e"/><rect x="14.7" y="5.2" width="2.1" height="2.1" fill="#d5513e"/><rect x="14.7" y="10.1" width="2.1" height="13.8" fill="#d5513e"/><rect x="19.5" y="5.2" width="2.1" height="18.7" fill="#d5513e"/><rect x="24.3" y="5.2" width="2.1" height="2.1" fill="#d5513e"/><rect x="24.3" y="10.1" width="2.1" height="13.8" fill="#d5513e"/><rect x="28.9" y="5.2" width="2.1" height="18.7" fill="#d5513e"/>
</svg>
<div class="b" style="left:1243px;top:1187.5px;width:797px;height:86px;background:#fff;border-top:1px solid #e2e2e2;box-sizing:border-box;"></div>
<div class="b" style="left:1744px;top:1208.3px;width:90.8px;height:44.6px;background:#769bd0;border-radius:6px;"></div>
<div class="t" style="left:1761px;top:1221.09px;font-size:17.7px;line-height:20.35px;color:#fff;">Cancel</div>
<div class="b" style="left:1846px;top:1208.3px;width:172.8px;height:44.6px;background:#1a1b2c;border-radius:6px;"></div>
<div class="t" style="left:1864.3px;top:1220.17px;font-size:18.7px;line-height:21.50px;color:#fff;">Create Template</div>
<div class="b" style="left:1243px;top:0px;width:797px;height:73px;background:linear-gradient(90deg,#17aadf 0%,#3fa6dc 45%,#7c9fd4 85%,#7e9fd4 100%);border-bottom:1px solid #c9e7f6;"></div>
<div class="t" style="left:1263px;top:23.78px;font-size:24px;line-height:27.60px;color:#fff;font-weight:700;transform:scaleX(0.9244);transform-origin:left center;">Create New Session Template</div>
<div class="b" style="left:1987px;top:16.8px;width:40px;height:40px;border:3px solid #fff;border-radius:50%;box-sizing:border-box;"></div>
<svg class="b" style="left:1998px;top:28px" width="18" height="18" viewBox="0 0 18 18"><path d="M3.5 3.5 L14.5 14.5 M14.5 3.5 L3.5 14.5" stroke="#fff" stroke-width="5" stroke-linecap="round"/></svg>
<div class="b" style="left:2040px;top:0px;width:8px;height:72px;background:#0c0d19;"></div>
<div class="b" style="left:2040px;top:72px;width:8px;height:1201px;background:#808080;"></div>
</body></html>
